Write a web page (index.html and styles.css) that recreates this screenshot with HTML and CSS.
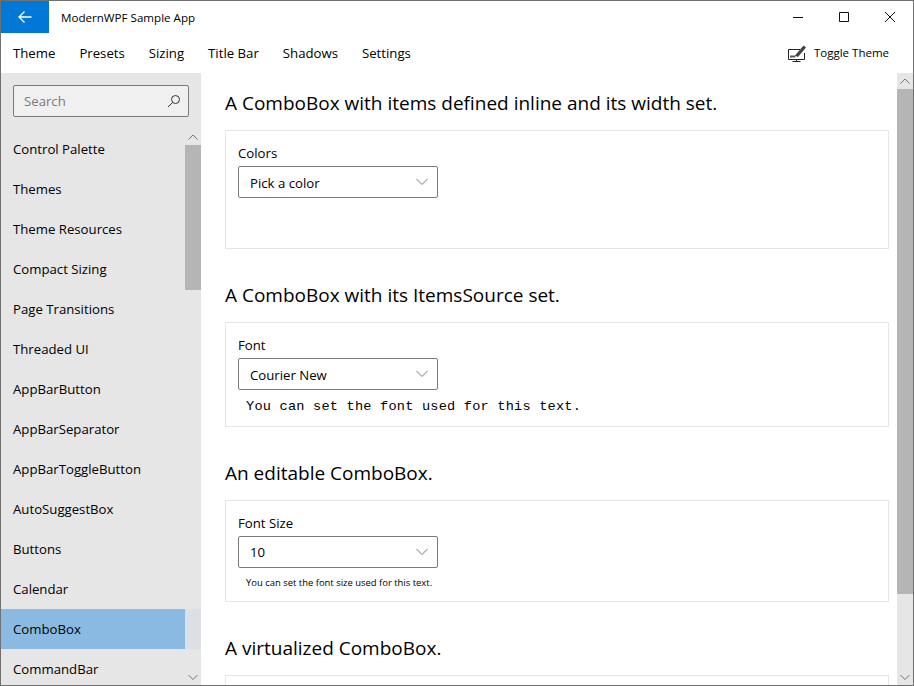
FILE: index.html
```html
<!DOCTYPE html>
<html lang="en">
<head>
    <meta charset="UTF-8">
    <title>ModernWPF Sample App</title>
    <link rel="stylesheet" href="styles.css">
</head>
<body>
    <div class="window">
        <div class="titlebar">
            <div class="back-btn">
                <svg width="16" height="16" viewBox="0 0 16 16"><path d="M14.500 8H2M7.500 2.500 2 8l5.500 5.500" fill="none" stroke="#fff" stroke-width="1.300"/></svg>
            </div>
            <div class="app-title">ModernWPF Sample App</div>
            <div class="caption-btns">
                <div class="caption-btn"><svg width="12" height="12" viewBox="0 0 12 12"><path d="M1 6.500h10" stroke="#111" fill="none"/></svg></div>
                <div class="caption-btn"><svg width="12" height="12" viewBox="0 0 12 12"><path d="M1.500 1.500h9v9h-9z" stroke="#111" fill="none"/></svg></div>
                <div class="caption-btn"><svg width="12" height="12" viewBox="0 0 12 12"><path d="M1 1l10 10M11 1 1 11" stroke="#111" fill="none"/></svg></div>
            </div>
        </div>

        <div class="menubar">
            <div class="menu-item">Theme</div>
            <div class="menu-item">Presets</div>
            <div class="menu-item">Sizing</div>
            <div class="menu-item">Title Bar</div>
            <div class="menu-item">Shadows</div>
            <div class="menu-item">Settings</div>
            <div class="toggle-theme">
                <svg width="20" height="18" viewBox="0 0 20 18">
                    <path d="M13 5.500H1.500v10h16V9M9.500 15.500v2M5.500 17.500h8" fill="none" stroke="#222"/>
                    <path d="M3 13.500h5l1-2H3z" fill="#555"/>
                    <path d="M8 11.500 16.500 1.500 19 3.500 11 13z" fill="#444"/>
                </svg>
                <span>Toggle Theme</span>
            </div>
        </div>

        <div class="content">
            <div class="sidebar">
                <div class="search-wrap">
                    <div class="search-box">
                        <span>Search</span>
                        <svg width="14" height="14" viewBox="0 0 14 14"><circle cx="8.500" cy="5.500" r="4" fill="none" stroke="#333"/><path d="M5.500 8.500 1 13" stroke="#333" fill="none"/></svg>
                    </div>
                </div>
                <div class="nav">
                    <div class="nav-list">
                        <div class="nav-item">Control Palette</div>
                        <div class="nav-item">Themes</div>
                        <div class="nav-item">Theme Resources</div>
                        <div class="nav-item">Compact Sizing</div>
                        <div class="nav-item">Page Transitions</div>
                        <div class="nav-item">Threaded UI</div>
                        <div class="nav-item">AppBarButton</div>
                        <div class="nav-item">AppBarSeparator</div>
                        <div class="nav-item">AppBarToggleButton</div>
                        <div class="nav-item">AutoSuggestBox</div>
                        <div class="nav-item">Buttons</div>
                        <div class="nav-item">Calendar</div>
                        <div class="nav-item selected">ComboBox</div>
                        <div class="nav-item">CommandBar</div>
                    </div>
                    <div class="nav-scroll">
                        <svg class="scroll-arrow" width="16" height="16" viewBox="0 0 16 16"><path d="M3.500 10.500 8 6l4.500 4.500" fill="none" stroke="#777"/></svg>
                        <div class="nav-thumb"></div>
                        <svg class="scroll-arrow nav-down" width="16" height="16" viewBox="0 0 16 16"><path d="M3.500 6 8 10.500 12.500 6" fill="none" stroke="#777"/></svg>
                    </div>
                </div>
            </div>

            <div class="main">
                <div class="section">
                    <h2>A ComboBox with items defined inline and its width set.</h2>
                    <div class="card card-tall">
                        <div class="field-label">Colors</div>
                        <div class="combo">
                            <span>Pick a color</span>
                            <svg width="12" height="8" viewBox="0 0 12 8"><path d="M.5 1 6 6.500 11.500 1" fill="none" stroke="#777"/></svg>
                        </div>
                    </div>
                </div>

                <div class="section">
                    <h2>A ComboBox with its ItemsSource set.</h2>
                    <div class="card">
                        <div class="field-label">Font</div>
                        <div class="combo">
                            <span>Courier New</span>
                            <svg width="12" height="8" viewBox="0 0 12 8"><path d="M.5 1 6 6.500 11.500 1" fill="none" stroke="#777"/></svg>
                        </div>
                        <div class="sample sample-mono">You can set the font used for this text.</div>
                    </div>
                </div>

                <div class="section">
                    <h2>An editable ComboBox.</h2>
                    <div class="card">
                        <div class="field-label">Font Size</div>
                        <div class="combo combo-edit">
                            <span>10</span>
                            <svg width="12" height="8" viewBox="0 0 12 8"><path d="M.5 1 6 6.500 11.500 1" fill="none" stroke="#777"/></svg>
                        </div>
                        <div class="sample sample-small">You can set the font size used for this text.</div>
                    </div>
                </div>

                <div class="section">
                    <h2>A virtualized ComboBox.</h2>
                    <div class="card card-tall"></div>
                </div>
            </div>

            <div class="main-scroll">
                <svg class="scroll-arrow" width="16" height="16" viewBox="0 0 16 16"><path d="M3.500 10.500 8 6l4.500 4.500" fill="none" stroke="#777"/></svg>
                <div class="main-thumb"></div>
                <svg class="scroll-arrow main-down" width="16" height="16" viewBox="0 0 16 16"><path d="M3.500 6 8 10.500 12.500 6" fill="none" stroke="#777"/></svg>
            </div>
        </div>
    </div>
</body>
</html>
```

FILE: styles.css
```css
* {
    box-sizing: border-box;
}

html, body {
    margin: 0;
    padding: 0;
    height: 100%;
    overflow: hidden;
}

body {
    font-family: "Open Sans", "Noto Sans", Arial, sans-serif;
    font-size: 13.200px;
    color: #000;
    background: #fff;
}

.window {
    width: 914px;
    height: 686px;
    border: 1px solid #707070;
    display: flex;
    flex-direction: column;
    overflow: hidden;
}

/* title bar */
.titlebar {
    height: 32px;
    flex: none;
    display: flex;
    align-items: center;
}

.back-btn {
    width: 48px;
    height: 32px;
    background: #0078d7;
    display: flex;
    justify-content: center;
    align-items: center;
}

.app-title {
    margin-left: 12px;
    font-size: 11.600px;
}

.caption-btns {
    margin-left: auto;
    display: flex;
}

.caption-btn {
    width: 46px;
    height: 32px;
    display: flex;
    justify-content: center;
    align-items: center;
}

/* menu */
.menubar {
    height: 40px;
    flex: none;
    display: flex;
    align-items: center;
    padding-left: 12px;
    padding-right: 24px;
    padding-bottom: 1px;
    gap: 24px;
}

.toggle-theme {
    margin-left: auto;
    display: flex;
    align-items: center;
    gap: 7px;
    font-size: 11.500px;
}

/* sidebar */
.content {
    flex: 1;
    display: flex;
    min-height: 0;
}

.sidebar {
    width: 200px;
    flex: none;
    background: #e6e6e6;
    display: flex;
    flex-direction: column;
    overflow: hidden;
}

.search-wrap {
    height: 56px;
    flex: none;
    padding: 12px 12px 0;
}

.search-box {
    height: 32px;
    border: 1px solid #7a7a7a;
    border-radius: 2px;
    background: #f0f0f0;
    color: #7a7a7a;
    display: flex;
    align-items: center;
    justify-content: space-between;
    padding: 0 7px 1px 10px;
}

.nav {
    flex: 1;
    display: flex;
    min-height: 0;
}

.nav-list {
    width: 184px;
    flex: none;
}

.nav-item {
    height: 40px;
    line-height: 40px;
    padding-left: 12px;
}

.nav-item.selected {
    background: #8abae2;
    box-shadow: 16px 0 0 #dce0e6;
}

.nav-scroll {
    width: 16px;
    position: relative;
}

.scroll-arrow {
    display: block;
}

.nav-thumb {
    height: 145px;
    background: #b5b5b5;
}

.nav-down {
    position: absolute;
    left: 0;
    bottom: 0;
}

/* main */
.main {
    flex: 1;
    padding: 16px 8px 0 24px;
    overflow: hidden;
}

.section {
    margin-bottom: 32px;
}

h2 {
    margin: 0 0 13px;
    font-size: 19px;
    font-weight: 400;
    line-height: 28px;
}

.card {
    border: 1px solid #e6e6e6;
    padding: 12px;
}

.card-tall {
    height: 119px;
}

.field-label {
    height: 23px;
    line-height: 21px;
}

.combo {
    width: 200px;
    height: 32px;
    border: 1px solid #7a7a7a;
    border-radius: 2px;
    display: flex;
    align-items: center;
    justify-content: space-between;
    padding: 0 9px 0 11px;
}

.combo span {
    padding-top: 1px;
}

.combo-edit span {
    padding-top: 0;
}

.sample {
    padding-left: 8px;
}

.sample-mono {
    font-family: "Liberation Mono", monospace;
    font-size: 13.600px;
    letter-spacing: 0.220px;
    line-height: 15px;
    margin-top: 9px;
}

.sample-small {
    font-size: 9.450px;
    line-height: 13px;
    margin-top: 8px;
}

.main-scroll {
    width: 16px;
    flex: none;
    background: #e6e6e6;
    position: relative;
}

.main-thumb {
    height: 505px;
    background: #b5b5b5;
}

.main-down {
    position: absolute;
    left: 0;
    bottom: 0;
}
```
